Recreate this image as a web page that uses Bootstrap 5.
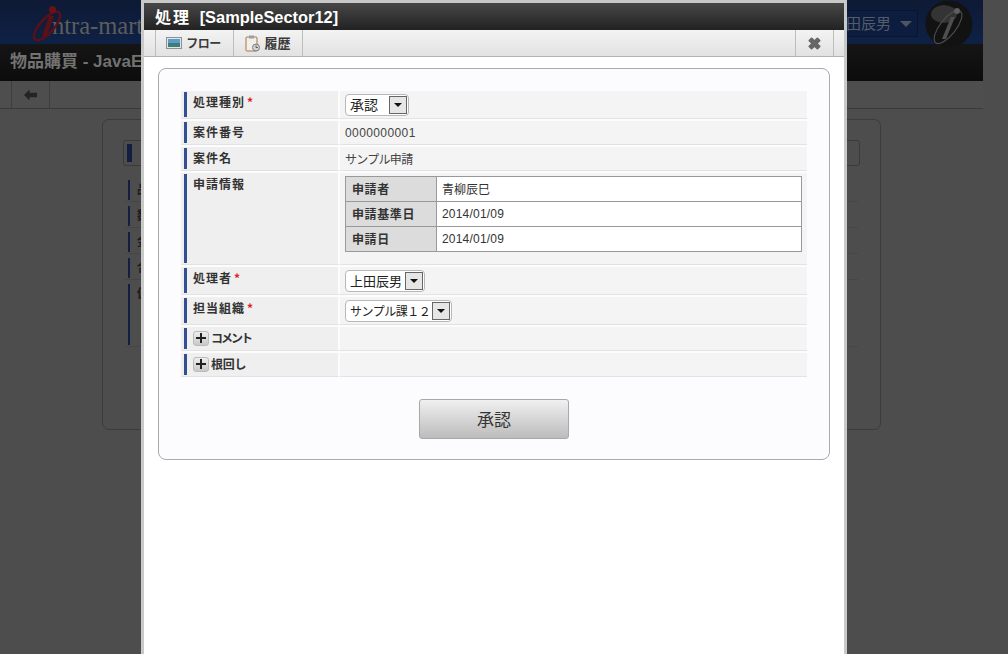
<!DOCTYPE html>
<html lang="ja">
<head>
<meta charset="utf-8">
<title>処理</title>
<link href="https://cdn.jsdelivr.net/npm/bootstrap@5.3.0/dist/css/bootstrap.min.css" rel="stylesheet">
<style>
html,body{height:100%;overflow:hidden}
body{background:#4d4d4d;font-family:"Noto Sans CJK JP","Liberation Sans",sans-serif;font-size:12px;color:#333;position:relative}
.bg-page{width:983px}
.bg-head{height:44px;background:linear-gradient(#0e1a35,#0e2145);position:relative}
.logo-word{font-family:"Liberation Serif",serif;font-size:24.5px;color:#5d5d5d;padding-left:52px;line-height:1;padding-top:14px}
.logo-mark{position:absolute;left:33px;top:6px}
.user-sel{position:absolute;left:700px;top:10px;width:218px;height:27px;background:#0c1d40;border:1px solid #081430;color:#555c68;font-size:15px;padding-right:5px}
.user-sel i{width:0;height:0;border:6px solid transparent;border-top:6px solid #4e5462;border-bottom:0;margin-left:9px;display:block}
.avatar{position:absolute;left:925px;top:0}
.bg-title{height:37px;background:linear-gradient(#151515,#0c0c0c);color:#727272;font-size:17px;font-weight:700;padding-left:10px;line-height:36px;font-family:"Liberation Sans","Noto Sans CJK JP",sans-serif;white-space:nowrap;overflow:hidden}
.bg-tool{height:28px;background:#4e4e4e;border-bottom:1px solid #3a3a3a}
.bg-back{margin-left:11px;width:39px;border:solid #3e3e3e;border-width:0 1px}
.bg-card{margin:10px 0 0 102px;width:779px;height:311px;border:1px solid #3c3c3c;border-radius:7px;padding:20px 20px}
.bg-cap{height:26px;border:1px solid #3a3a3a;border-radius:3px;padding:3px}
.bg-cap b{display:block;width:5px;height:18px;background:#121f42}
.bg-stack{margin:12px 2px 0;gap:2px}
.bg-row{height:24px;border-bottom:1px solid #464646;padding:2px 0 1px 3px;gap:7px;color:#1c1c1c;font-weight:700;font-size:12px;line-height:18px;overflow:hidden}
.bg-row b{display:block;width:2px;height:100%;background:#121f42;flex:none}
.bg-row.tall{height:65px}
.dlg{position:absolute;left:141px;top:0;width:706px;height:654px;border:solid #c9c9c9;border-width:3px 3px 0;background:#fff}
.dlg-title{height:27px;background:linear-gradient(#474747,#222);color:#fff;font-size:16px;font-weight:700;padding-left:11px;line-height:26px;white-space:pre;font-family:"Noto Sans CJK JP",sans-serif}
.dlg-title em{font-style:normal;letter-spacing:2px;margin-right:5px}
.dlg-title span{font-family:"Liberation Sans",sans-serif;font-size:16.4px}
.dlg-tabs{height:27px;background:linear-gradient(#f3f3f3,#e2e2e2);border-bottom:1px solid #b4b4b4;padding-left:11px;color:#333}
.tab-item{height:26px;border-right:1px solid #bdbdbd;font-weight:700;gap:4px;font-size:12px;color:#3a3a3a}
.tab-first{border-left:1px solid #bdbdbd;width:79px;letter-spacing:-.5px;padding-right:2px}
.tab-second{width:69px;font-size:13px;gap:4px}
.tab-close{width:39px;margin-left:auto;margin-right:10px;border-left:1px solid #bdbdbd;border-right:1px solid #bdbdbd}
.dlg-card{margin:11px 14px 0;height:392px;border:1px solid #aaa;border-radius:8px;background:#fcfcff;padding:20px 22px 0 22px}
.dlg-form{width:626px;table-layout:fixed;border-collapse:separate;border-spacing:0 2px}
.dlg-form>tbody>tr>th{width:159px;border-right:2px solid #fcfcff;background:#efefef;border-bottom:1px solid #e2e2e2;padding:0 0 0 12px;font-size:12px;font-weight:700;color:#333;vertical-align:top;position:relative;line-height:22px;letter-spacing:1px}
.dlg-form>tbody>tr>th::before{content:"";position:absolute;left:3px;top:1px;bottom:1px;width:3px;background:#324f95}
.dlg-form>tbody>tr>td{background:#f4f4f4;border-bottom:1px solid #e2e2e2;padding:0 0 0 5px;vertical-align:middle;color:#444}
.req{color:#e02020;font-weight:700;margin-left:2px}
.h27{height:28px}.h24{height:24px}.h29{height:28px}
.num{font-family:"Liberation Sans",sans-serif;color:#4a4058;font-size:12px;letter-spacing:.4px}
.num-in{font-family:"Liberation Sans",sans-serif;letter-spacing:.2px}
.txt-tight{letter-spacing:-.7px}
.sel-x{display:inline-flex;align-items:center;justify-content:space-between;height:22px;background:#fff;border:1px solid #b8b8b8;border-radius:4px;color:#222;padding:0 1px 0 4px;vertical-align:middle;white-space:nowrap}
.sel-x i{width:18px;height:18px;border:1px solid #666;background:#e6e6e6;display:flex;align-items:center;justify-content:center;flex:none}
.sel-x i::after{content:"";border:4px solid transparent;border-top:4px solid #111;border-bottom:0}
.sw1{width:64px;font-size:14px}.sw2{width:80px;font-size:13px}.sw3{width:107px;font-size:12px;letter-spacing:-.5px}
.inner-t{width:457px;border-collapse:collapse;margin-top:3px;margin-bottom:12px}
.inner-t th{width:91px;background:#dcdcdc;border:1px solid #999;height:25px;padding-left:6px;font-weight:700;color:#333;letter-spacing:.6px}
.inner-t td{background:#fff;border:1px solid #999;padding-left:5px;color:#333}
.plus{width:16px;height:15px;background:linear-gradient(#eee,#c8c8c8);border:1px solid #bbb;border-radius:3px;color:#222;margin-right:2px;flex:none}
.lbl-a{letter-spacing:-2px}
.lbl-b{letter-spacing:-.3px}
.btn-ok{width:150px;height:40px;background:linear-gradient(#f0f0f0,#bcbcbc);border:1px solid #a8a8a8;border-radius:3px;font-size:17px;color:#333;padding:0}
.btn-ok:hover{background:linear-gradient(#f0f0f0,#bcbcbc);color:#333;border-color:#a8a8a8}
.gap-ok{margin-top:20px}
</style>
</head>
<body>
<div class="bg-page">
  <div class="bg-head">
    <svg class="logo-mark" width="36" height="36" viewBox="0 0 36 36"><ellipse cx="14" cy="20" rx="7" ry="18" transform="rotate(42 14 20)" fill="none" stroke="#5a1015" stroke-width="2.500"/><circle cx="19.500" cy="3.500" r="3.500" fill="#6a1218"/><path d="M16 10 L9 30 L14 30 L21 10Z" fill="#5a1015"/></svg>
    <div class="logo-word">ntra-mart</div>
    <div class="user-sel d-flex align-items-center justify-content-end">上田辰男<i></i></div>
    <svg class="avatar" width="48" height="48" viewBox="0 0 48 48"><circle cx="24" cy="24" r="23.500" fill="#121212"/><ellipse cx="19" cy="14" rx="13" ry="9" fill="#343434"/><ellipse cx="23" cy="27" rx="8" ry="20" transform="rotate(38 23 27)" fill="none" stroke="#4a4a4a" stroke-width="1.200"/><path d="M26 17 L17 39 L21 39 L30 17Z" fill="#4f4f4f"/><circle cx="32" cy="11" r="3" fill="#5e5e5e"/></svg>
  </div>
  <div class="bg-title">物品購買 - JavaEE開発モデル</div>
  <div class="bg-tool d-flex">
    <div class="bg-back d-flex align-items-center justify-content-center">
      <svg width="13" height="12" viewBox="0 0 14 12"><path d="M0 6 L6 0 V3.500 H14 V8.500 H6 V12Z" fill="#242424"/></svg>
    </div>
  </div>
  <div class="bg-card">
    <div class="bg-cap"><b></b></div>
    <div class="bg-stack d-flex flex-column">
      <div class="bg-row d-flex"><b></b>品名</div>
      <div class="bg-row d-flex"><b></b>数量</div>
      <div class="bg-row d-flex"><b></b>金額</div>
      <div class="bg-row d-flex"><b></b>合計</div>
      <div class="bg-row tall d-flex"><b></b>備考</div>
    </div>
  </div>
</div>

<div class="dlg">
  <div class="dlg-title"><em>処理</em> <span>[SampleSector12]</span></div>
  <div class="dlg-tabs d-flex">
    <div class="tab-item tab-first d-flex align-items-center justify-content-center">
      <svg width="16" height="12" viewBox="0 0 16 12"><rect x=".5" y=".5" width="15" height="11" fill="#dfe6ea" stroke="#8b9297"/><rect x="2" y="2" width="12" height="4" fill="#5b9ccc"/><rect x="2" y="6" width="12" height="4" fill="#3d7f72"/></svg>
      <span>フロー</span>
    </div>
    <div class="tab-item tab-second d-flex align-items-center justify-content-center">
      <svg width="15" height="19" viewBox="0 0 15 17"><rect x="1" y="2" width="11" height="14" rx="1" fill="#f2efe6" stroke="#a9744a"/><rect x="4" y="0.500" width="5" height="3" fill="#9aa0a4"/><circle cx="11" cy="12.500" r="3.500" fill="#cfd3d5" stroke="#7a7f83"/><path d="M11 10.500 V12.500 H13" stroke="#444" fill="none" stroke-width=".8"/></svg>
      <span>履歴</span>
    </div>
    <div class="tab-close d-flex align-items-center justify-content-center">
      <svg width="15" height="15" viewBox="0 0 13 13"><path d="M2 4 L4 2 L6.500 4.500 L9 2 L11 4 L8.500 6.500 L11 9 L9 11 L6.500 8.500 L4 11 L2 9 L4.500 6.500Z" fill="#666" stroke="#666" stroke-width="1.500" stroke-linejoin="round"/></svg>
    </div>
  </div>
  <div class="dlg-card">
    <table class="dlg-form">
      <tbody>
        <tr class="h27"><th>処理種別<span class="req">*</span></th><td><span class="sel-x sw1">承認<i></i></span></td></tr>
        <tr class="h24"><th>案件番号</th><td class="num">0000000001</td></tr>
        <tr class="h24"><th>案件名</th><td class="txt-tight">サンプル申請</td></tr>
        <tr><th>申請情報</th><td>
          <table class="inner-t">
            <tbody>
              <tr><th>申請者</th><td>青柳辰巳</td></tr>
              <tr><th>申請基準日</th><td class="num-in">2014/01/09</td></tr>
              <tr><th>申請日</th><td class="num-in">2014/01/09</td></tr>
            </tbody>
          </table>
        </td></tr>
        <tr class="h29"><th>処理者<span class="req">*</span></th><td><span class="sel-x sw2">上田辰男<i></i></span></td></tr>
        <tr class="h29"><th>担当組織<span class="req">*</span></th><td><span class="sel-x sw3">サンプル課１２<i></i></span></td></tr>
        <tr class="h24"><th><span class="d-flex align-items-center h-100"><span class="plus d-flex align-items-center justify-content-center"><svg width="10" height="10" viewBox="0 0 10 10"><path d="M0 4 H10 V6 H0Z M4 0 H6 V10 H4Z" fill="#222"/></svg></span><span class="lbl-a">コメント</span></span></th><td></td></tr>
        <tr class="h24"><th><span class="d-flex align-items-center h-100"><span class="plus d-flex align-items-center justify-content-center"><svg width="10" height="10" viewBox="0 0 10 10"><path d="M0 4 H10 V6 H0Z M4 0 H6 V10 H4Z" fill="#222"/></svg></span><span class="lbl-b">根回し</span></span></th><td></td></tr>
      </tbody>
    </table>
    <div class="d-flex justify-content-center gap-ok">
      <button type="button" class="btn btn-ok">承認</button>
    </div>
  </div>
</div>
<script src="https://cdn.jsdelivr.net/npm/bootstrap@5.3.0/dist/js/bootstrap.bundle.min.js"></script>
</body>
</html>
